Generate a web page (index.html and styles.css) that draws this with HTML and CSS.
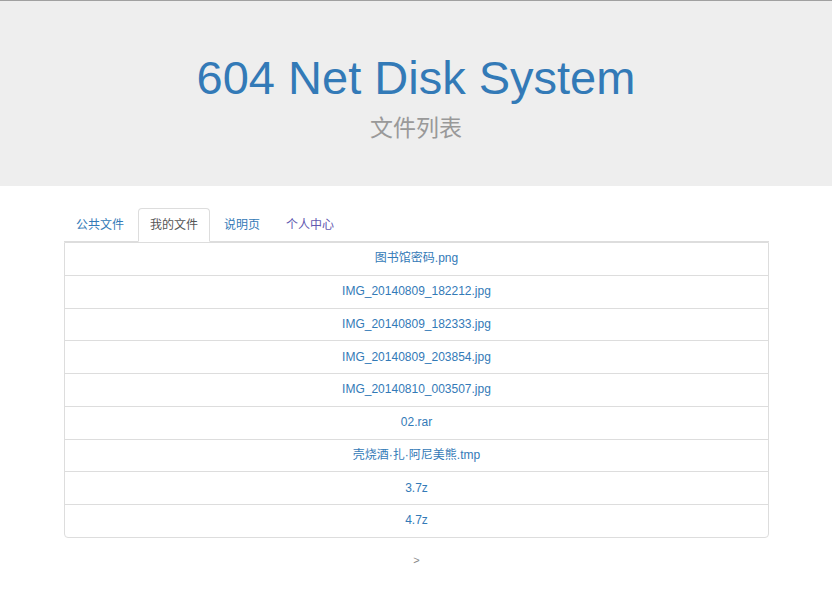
FILE: index.html
```html
<!DOCTYPE html>
<html lang="zh-CN">
<head>
<meta charset="utf-8">
<title>604 Net Disk System</title>
<link rel="stylesheet" href="styles.css">
</head>
<body>
<header class="jumbotron">
  <h1 class="title"><a href="#">604 Net Disk System</a></h1>
  <p class="subtitle">文件列表</p>
</header>
<main class="container">
  <ul class="tabs">
    <li class="tab"><a href="#">公共文件</a></li>
    <li class="tab active"><a href="#">我的文件</a></li>
    <li class="tab"><a href="#">说明页</a></li>
    <li class="tab visited"><a href="#">个人中心</a></li>
  </ul>
  <div class="file-list">
    <a class="file" href="#">图书馆密码.png</a>
    <a class="file" href="#">IMG_20140809_182212.jpg</a>
    <a class="file" href="#">IMG_20140809_182333.jpg</a>
    <a class="file" href="#">IMG_20140809_203854.jpg</a>
    <a class="file" href="#">IMG_20140810_003507.jpg</a>
    <a class="file" href="#">02.rar</a>
    <a class="file" href="#">壳烧酒·扎·阿尼美熊.tmp</a>
    <a class="file" href="#">3.7z</a>
    <a class="file" href="#">4.7z</a>
  </div>
  <div class="pager"><a href="#">&gt;</a></div>
</main>
</body>
</html>
```
FILE: styles.css
```css
html, body {
  margin: 0;
  padding: 0;
  background: #fff;
}
body {
  font-family: "Liberation Sans", Arial, "Noto Sans CJK SC", sans-serif;
  font-size: 12px;
  line-height: 17px;
  color: #333;
  border-top: 1px solid #a0a0a0;
}
a {
  text-decoration: none;
  color: #337ab7;
}
.jumbotron {
  background: #eee;
  height: 185px;
  box-sizing: border-box;
  padding-top: 51px;
  text-align: center;
}
.title {
  margin: 0;
  font-size: 47px;
  font-weight: normal;
  line-height: 52px;
}
.title a {
  color: #337ab7;
}
.subtitle {
  margin: 9px 0 0;
  font-size: 23px;
  line-height: 30px;
  color: #999;
}
.container {
  margin: 22px 63px 0 64px;
}
.tabs {
  list-style: none;
  margin: 0;
  padding: 0;
  display: flex;
  border-bottom: 1px solid #ddd;
}
.tab {
  margin: 0 2px -1px 0;
}
.tab a {
  display: block;
  padding: 8px 11px;
  line-height: 16px;
  border: 1px solid transparent;
  border-radius: 4px 4px 0 0;
  color: #337ab7;
}
.tab.active a {
  color: #555;
  background: #fff;
  border-color: #ddd #ddd transparent;
}
.tab.visited a {
  color: #6259b0;
}
.file-list {
  display: flex;
  flex-direction: column;
  border: 1px solid #ddd;
  border-radius: 0 0 4px 4px;
}
.file {
  display: block;
  text-align: center;
  padding: 7.39px 12px;
  line-height: 17px;
  color: #337ab7;
  border-top: 1px solid #ddd;
}
.file:first-child {
  border-top: 0;
}
.pager {
  margin-top: 14px;
  text-align: center;
  font-size: 11px;
}
.pager a {
  color: #888;
}
```
